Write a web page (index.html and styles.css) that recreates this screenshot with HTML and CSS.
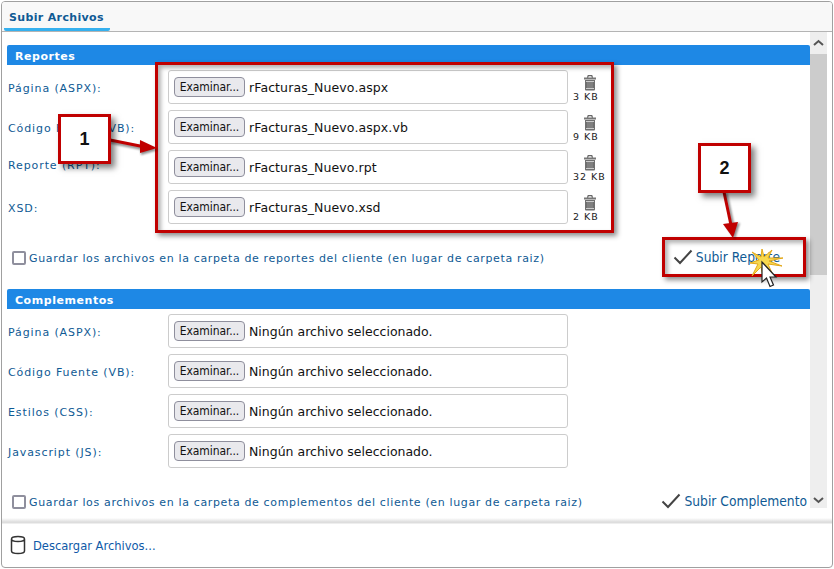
FILE: index.html
```html
<!DOCTYPE html>
<html lang="es">
<head>
<meta charset="utf-8">
<title>Subir Archivos</title>
<link rel="stylesheet" href="styles.css">
</head>
<body>
<svg class="defs" width="0" height="0">
  <symbol id="trash" viewBox="0 0 14 16">
    <path d="M1 2.600h12v2H1z" fill="#777"/>
    <path d="M4.500 2.800 5.200.7h3.600l.7 2.100" fill="none" stroke="#666" stroke-width="1.200"/>
    <path d="M2 5h10v9.500a1 1 0 0 1-1 1H3a1 1 0 0 1-1-1z" fill="#6f6f6f"/>
    <path d="M3 6.500h8M3 13.500h8" stroke="#ccc" stroke-width="1"/>
    <path d="M5 7v6M7 7v6M9 7v6" stroke="#999" stroke-width=".8"/>
  </symbol>
  <symbol id="check" viewBox="0 0 20 16">
    <path d="M1.500 8.500 7 14 18.500 1.500" fill="none" stroke="#444" stroke-width="2"/>
  </symbol>
</svg>
<div class="window">
  <div class="tabs"><span class="tab">Subir Archivos</span></div>
  <div class="body">
    <div class="scroll">
      <section class="section">
        <h2 class="heading">Reportes</h2>
        <div class="rows">
          <div class="row"><label class="lbl">Página (ASPX):</label><div class="field"><span class="btn">Examinar...</span><span class="fname picked">rFacturas_Nuevo.aspx</span></div><div class="size"><svg class="trash"><use href="#trash"/></svg><span>3 KB</span></div></div>
          <div class="row"><label class="lbl">Código Fuente (VB):</label><div class="field"><span class="btn">Examinar...</span><span class="fname picked">rFacturas_Nuevo.aspx.vb</span></div><div class="size"><svg class="trash"><use href="#trash"/></svg><span>9 KB</span></div></div>
          <div class="row"><label class="lbl lbl-up">Reporte (RPT):</label><div class="field"><span class="btn">Examinar...</span><span class="fname picked">rFacturas_Nuevo.rpt</span></div><div class="size"><svg class="trash"><use href="#trash"/></svg><span>32 KB</span></div></div>
          <div class="row"><label class="lbl">XSD:</label><div class="field"><span class="btn">Examinar...</span><span class="fname picked">rFacturas_Nuevo.xsd</span></div><div class="size"><svg class="trash"><use href="#trash"/></svg><span>2 KB</span></div></div>
        </div>
        <div class="actions">
          <label class="opt"><span class="box"></span>Guardar los archivos en la carpeta de reportes del cliente (en lugar de carpeta raiz)</label>
          <a class="submit submit-r"><svg class="check"><use href="#check"/></svg>Subir Reporte</a>
        </div>
      </section>
      <section class="section">
        <h2 class="heading">Complementos</h2>
        <div class="rows">
          <div class="row"><label class="lbl">Página (ASPX):</label><div class="field"><span class="btn">Examinar...</span><span class="fname">Ningún archivo seleccionado.</span></div></div>
          <div class="row"><label class="lbl">Código Fuente (VB):</label><div class="field"><span class="btn">Examinar...</span><span class="fname">Ningún archivo seleccionado.</span></div></div>
          <div class="row"><label class="lbl">Estilos (CSS):</label><div class="field"><span class="btn">Examinar...</span><span class="fname">Ningún archivo seleccionado.</span></div></div>
          <div class="row"><label class="lbl">Javascript (JS):</label><div class="field"><span class="btn">Examinar...</span><span class="fname">Ningún archivo seleccionado.</span></div></div>
        </div>
        <div class="actions actions-c">
          <label class="opt"><span class="box"></span>Guardar los archivos en la carpeta de complementos del cliente (en lugar de carpeta raiz)</label>
          <a class="submit"><svg class="check"><use href="#check"/></svg>Subir Complemento</a>
        </div>
      </section>
    </div>
    <div class="scrollbar">
      <svg class="arrow" viewBox="0 0 17 22"><path d="M4 13 8.500 9 13 13" fill="none" stroke="#555" stroke-width="2"/></svg>
      <div class="thumb"></div>
      <div class="track"></div>
      <svg class="arrow arrow-end" viewBox="0 0 17 17"><path d="M4 7 8.500 11 13 7" fill="none" stroke="#555" stroke-width="2"/></svg>
    </div>
  </div>
  <div class="footer">
    <svg class="db" viewBox="0 0 16 20"><path d="M1.500 4v12c0 1.500 3 2.500 6.500 2.500s6.500-1 6.500-2.500V4c0-1.500-3-2.500-6.500-2.500S1.500 2.500 1.500 4c0 1.500 3 2.500 6.500 2.500s6.500-1 6.500-2.500" fill="none" stroke="#333" stroke-width="1.500"/></svg>
    <a class="download">Descargar Archivos...</a>
  </div>
</div>

<div class="mark mark-group"></div>
<div class="mark mark-submit"></div>
<svg class="arrows" viewBox="0 0 834 569" width="834" height="569">
  <g class="arrow-shadow">
    <path d="M110 142 145 149" stroke="#000" stroke-width="3" fill="none"/>
    <path d="M140 142 158 150 141 155z"/>
    <path d="M726 193 733 226" stroke="#000" stroke-width="3" fill="none"/>
    <path d="M725 225 740 223 735 239z"/>
  </g>
  <path d="M110 140 145 147" stroke="#c00000" stroke-width="3" fill="none"/>
  <path d="M140 140 157 148 140 153z" fill="#c00000"/>
  <path d="M724 192 731 225" stroke="#c00000" stroke-width="3" fill="none"/>
  <path d="M723 224 738 222 733 238z" fill="#c00000"/>
  <path d="M762 249 764 257 772 250 768 258 783 258 769 261 782 266 768 264 772 273 765 266 763 277 761 267 752 276 758 264 750 263 759 260 752 252 761 257z" fill="#f7d84f" stroke="#e3a81a" stroke-width="1"/>
  <path d="M762 262v20l4.500-4 3.500 8.500 3.500-1.500-3.500-8h6z" fill="#fff" stroke="#222" stroke-width="1.200"/>
</svg>
<div class="callout callout-1">1</div>
<div class="callout callout-2">2</div>
</body>
</html>
```
FILE: styles.css
```css
* { box-sizing: border-box; }
html, body { margin: 0; height: 100%; overflow: hidden; background: #fff; }
body { padding: 1px 1px 0 1px; width: 834px; height: 569px; position: relative; font-family: "DejaVu Sans", sans-serif; }
.defs { position: absolute; }

.window { width: 832px; height: 567px; border: 1px solid #a0a0a0; border-radius: 4px; background: #fff; display: flex; flex-direction: column; overflow: hidden; }

.tabs { height: 30px; flex: none; background: #f8f8f8; border-bottom: 1px solid #b4b4b4; padding-left: 2px; display: flex; }
.tab { height: 29px; padding: 9px 6px 0 5px; font: bold 11px "DejaVu Sans", sans-serif; letter-spacing: .35px; color: #0f5a94; border-bottom: 3px solid #35b0ee; border-radius: 0 0 2px 2px; }

.body { height: 490px; flex: none; display: flex; }
.scroll { width: 808px; flex: none; padding: 13px 0 0 5px; overflow: hidden; }
.section { width: 803px; }
.heading { margin: 0; height: 20px; background: #1e88e5; border-radius: 2px 2px 0 0; color: #fff; font: bold 11px/23px "DejaVu Sans", sans-serif; letter-spacing: .55px; padding-left: 8px; }
.rows { display: flex; flex-direction: column; gap: 6px; padding-top: 5px; }
.row { height: 34px; display: flex; align-items: center; }
.lbl { width: 161px; flex: none; padding-left: 1px; font-size: 11px; letter-spacing: .9px; color: #0f5a94; padding-top: 2px; white-space: nowrap; }
.lbl-up { padding-top: 0; margin-bottom: 4px; }
.field { width: 400px; height: 34px; flex: none; border: 1px solid #ccc; border-radius: 3px; background: #fff; display: flex; align-items: center; padding-left: 5px; }
.btn { width: 71px; height: 20px; flex: none; background: #e9e9ed; border: 1px solid #8f8f9d; border-radius: 4px; font: 12px/18px "DejaVu Sans Condensed", "DejaVu Sans", sans-serif; color: #111; text-align: center; letter-spacing: -.1px; }
.fname { margin-left: 4px; font-size: 12.500px; color: #111; white-space: nowrap; }
.picked { letter-spacing: .1px; }
.size { width: 44px; margin-left: 5px; display: flex; flex-direction: column; align-items: flex-start; font-size: 9.500px; color: #222; letter-spacing: 1px; line-height: 11px; padding-top: 3px; white-space: nowrap; }
.trash { width: 14px; height: 16px; margin-left: 10px; }

.actions { height: 30px; margin: 19px 0 16px; display: flex; align-items: center; justify-content: space-between; padding-right: 30px; }
.actions-c { padding-right: 3px; }
.opt { display: flex; align-items: center; padding-left: 5px; font-size: 11px; letter-spacing: .64px; color: #0f5a94; white-space: nowrap; }
.box { width: 14px; height: 14px; border: 2px solid #8f8f9d; border-radius: 2px; margin-right: 3px; background: #fff; }
.submit { display: flex; align-items: center; font: 13.700px "DejaVu Sans Condensed", "DejaVu Sans", sans-serif; color: #0f5a94; white-space: nowrap; padding-bottom: 2px; }
.check { width: 20px; height: 16px; margin-right: 3px; }

.scrollbar { width: 17px; height: 476px; flex: none; background: #eee; display: flex; flex-direction: column; }
.arrow { width: 17px; height: 22px; flex: none; }
.arrow-end { height: 17px; }
.thumb { height: 221px; background: #ccc; flex: none; }
.track { flex: 1; }

.footer { flex: 1; border-top: 1px solid #ddd; box-shadow: inset 0 1px 0 #eee; position: relative; display: flex; align-items: center; padding-left: 8px; }
.footer::before { content: ""; position: absolute; left: 0; right: 0; top: -5px; height: 4px; background: linear-gradient(#fff, #ddd); }
.db { width: 16px; height: 20px; margin-right: 7px; }
.download { font: 12.800px "DejaVu Sans Condensed", "DejaVu Sans", sans-serif; color: #0f5aa8; }

.mark { position: absolute; border: 3px solid #c00000; box-shadow: 3px 3px 5px rgba(0,0,0,.45), inset 3px 3px 4px rgba(0,0,0,.3); }
.mark-group { left: 155px; top: 62px; width: 459px; height: 171px; }
.mark-submit { left: 662px; top: 237px; width: 144px; height: 40px; }
.arrows { position: absolute; left: 0; top: 0; pointer-events: none; }
.arrow-shadow { opacity: .45; filter: blur(1px); }
.callout { position: absolute; width: 53px; height: 50px; background: #fff; border: 3px solid #c00000; box-shadow: 4px 4px 6px rgba(0,0,0,.5); font: bold 18px/44px "Liberation Sans", sans-serif; color: #111; text-align: center; }
.callout-1 { left: 58px; top: 114px; }
.callout-2 { left: 698px; top: 143px; }
```
